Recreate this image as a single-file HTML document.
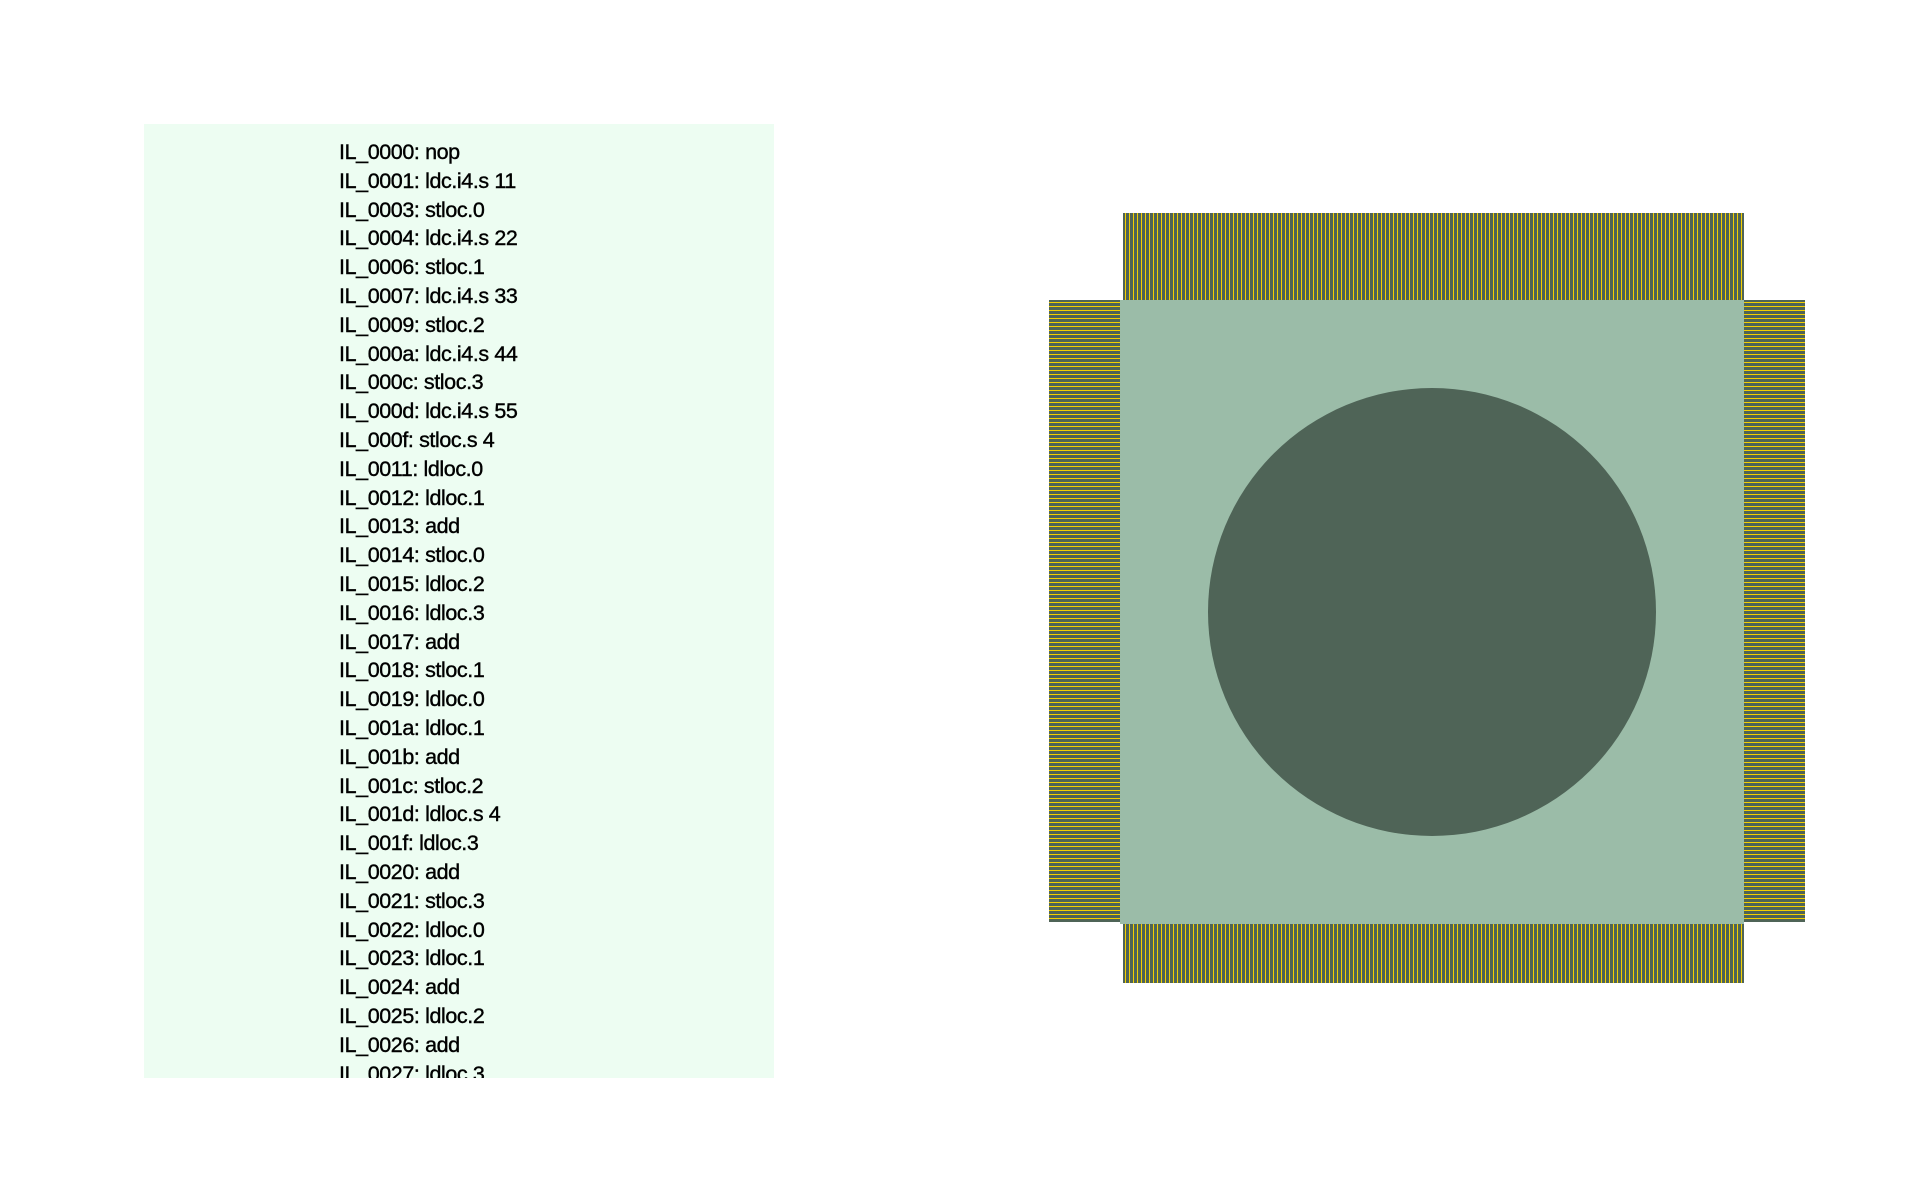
<!DOCTYPE html>
<html><head><meta charset="utf-8"><style>
html,body{margin:0;padding:0;background:#fff;width:1920px;height:1200px;overflow:hidden}
.panel{position:absolute;left:144px;top:124px;width:630px;height:954px;background:#edfdf2;overflow:hidden}
.txt{position:absolute;left:195px;top:14px;font-family:"Liberation Sans",sans-serif;font-size:21.5px;letter-spacing:-0.4px;line-height:28.8px;color:#000;white-space:pre;-webkit-text-stroke:0.4px #000}
.vp{position:absolute;background:repeating-linear-gradient(90deg,#4f6457 0 2px,#f5d000 2px 3.2px,#4f6457 3.2px 4px)}
.hp{position:absolute;background:repeating-linear-gradient(180deg,#4f6457 0 2px,#f5d000 2px 3.2px,#4f6457 3.2px 4px)}
.body{position:absolute;left:1120px;top:300px;width:624px;height:624px;background:#9bbca8}
.circ{position:absolute;left:1208px;top:388px;width:448px;height:448px;border-radius:50%;background:#4f6457}
</style></head><body>
<div class="panel"><div class="txt">IL_0000: nop
IL_0001: ldc.i4.s 11
IL_0003: stloc.0
IL_0004: ldc.i4.s 22
IL_0006: stloc.1
IL_0007: ldc.i4.s 33
IL_0009: stloc.2
IL_000a: ldc.i4.s 44
IL_000c: stloc.3
IL_000d: ldc.i4.s 55
IL_000f: stloc.s 4
IL_0011: ldloc.0
IL_0012: ldloc.1
IL_0013: add
IL_0014: stloc.0
IL_0015: ldloc.2
IL_0016: ldloc.3
IL_0017: add
IL_0018: stloc.1
IL_0019: ldloc.0
IL_001a: ldloc.1
IL_001b: add
IL_001c: stloc.2
IL_001d: ldloc.s 4
IL_001f: ldloc.3
IL_0020: add
IL_0021: stloc.3
IL_0022: ldloc.0
IL_0023: ldloc.1
IL_0024: add
IL_0025: ldloc.2
IL_0026: add
IL_0027: ldloc.3</div></div>
<div class="vp" style="left:1123px;top:213px;width:621px;height:87px"></div>
<div class="vp" style="left:1123px;top:924px;width:621px;height:59px"></div>
<div class="hp" style="left:1049px;top:300px;width:71px;height:622px"></div>
<div class="hp" style="left:1744px;top:300px;width:61px;height:622px"></div>
<div class="body"></div>
<div class="circ"></div>
</body></html>
